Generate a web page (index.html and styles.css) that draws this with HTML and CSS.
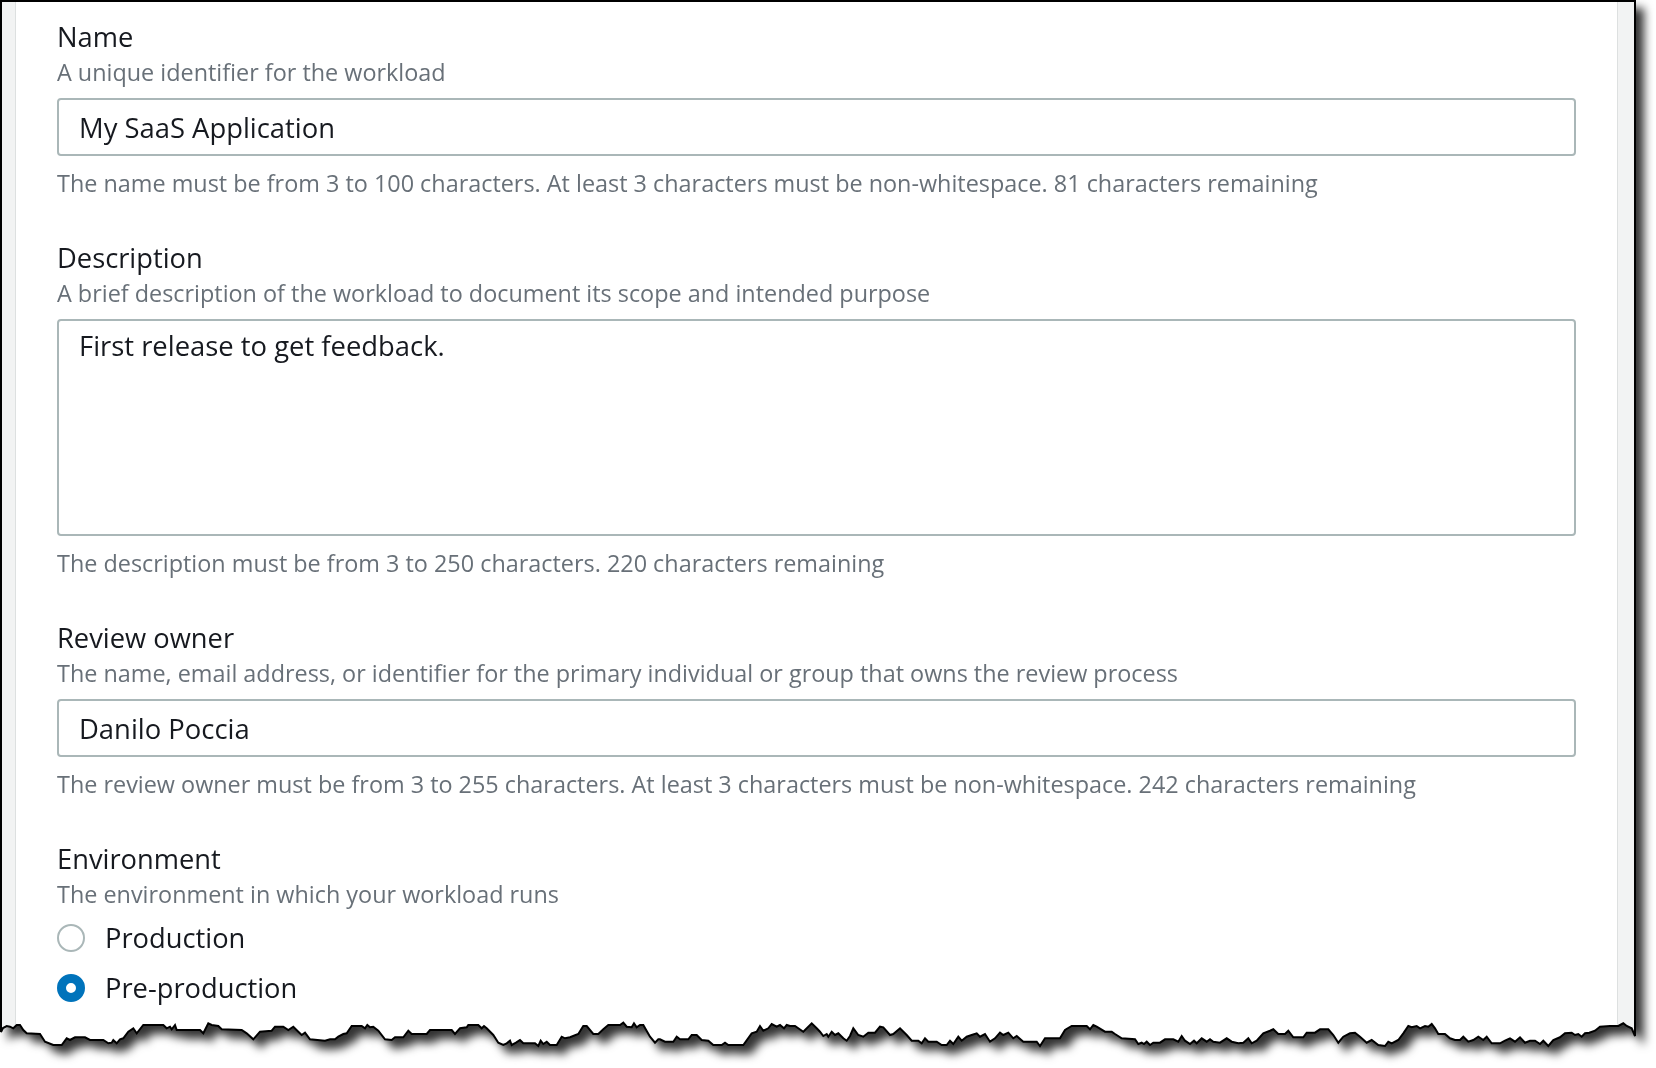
FILE: index.html
```html
<!DOCTYPE html>
<html lang="en">
<head>
<meta charset="utf-8">
<title>Workload properties</title>
<link rel="stylesheet" href="styles.css">
</head>
<body>
<div class="paper">
  <div class="sheet">
    <div class="strip strip-left"></div>
    <main class="form">
      <div class="field">
        <label class="label" for="name">Name</label>
        <div class="desc">A unique identifier for the workload</div>
        <input class="input" id="name" type="text" value="My SaaS Application">
        <div class="constraint">The name must be from 3 to 100 characters. At least 3 characters must be non-whitespace. 81 characters remaining</div>
      </div>
      <div class="field">
        <label class="label" for="description">Description</label>
        <div class="desc">A brief description of the workload to document its scope and intended purpose</div>
        <textarea class="input textarea" id="description">First release to get feedback.</textarea>
        <div class="constraint">The description must be from 3 to 250 characters. 220 characters remaining</div>
      </div>
      <div class="field">
        <label class="label" for="owner">Review owner</label>
        <div class="desc">The name, email address, or identifier for the primary individual or group that owns the review process</div>
        <input class="input" id="owner" type="text" value="Danilo Poccia">
        <div class="constraint">The review owner must be from 3 to 255 characters. At least 3 characters must be non-whitespace. 242 characters remaining</div>
      </div>
      <div class="field">
        <div class="label">Environment</div>
        <div class="desc">The environment in which your workload runs</div>
        <div class="radios">
          <label class="radio"><input type="radio" name="env"><span>Production</span></label>
          <label class="radio"><input type="radio" name="env" checked><span>Pre-production</span></label>
        </div>
      </div>
    </main>
    <div class="strip strip-right"></div>
  </div>
  <svg class="torn" width="1636" height="48" viewBox="0 1020 1636 48" aria-hidden="true">
    <defs>
      <clipPath id="tear">
        <polygon points="0,1020 0,1032 3,1028 6.7,1026 10,1026.7 13.3,1028.3 16.7,1025 20,1025 23.3,1030 26.7,1033.3 40,1034 45,1041.7 53.3,1045 61.7,1045 66.7,1038.3 70,1040 75,1037.3 85,1037.3 90,1040 103.3,1040 108.3,1043.3 111.7,1042.7 113.3,1040 116.7,1043.3 120,1039.3 123.3,1038.3 128.3,1031.7 133.3,1028.3 136.7,1033.3 143.3,1025 163.3,1025 166.7,1028.3 170,1026.7 171.7,1029.3 175,1025 176.7,1030 200,1030 203.3,1033.3 208.3,1023.3 211.7,1025 218.3,1026 221.7,1029.3 241.7,1030 246.7,1033.3 253.3,1039.3 260,1031.7 271.7,1030.7 275,1026.7 283.3,1026.7 288.3,1030 293.3,1026.7 298.3,1031.7 301.7,1035 305,1032.7 310,1039.3 325,1040.7 330,1039.3 335,1039.3 338.3,1036.7 343.3,1034 346.7,1033.3 351.7,1026 361.7,1026 365,1028.3 367.3,1025 370,1027.3 373.3,1026.7 378.3,1030.7 385,1039.3 391.7,1040 395,1037.3 403.3,1037.3 408.3,1030.7 411.7,1034 426.7,1034 430,1030 451.7,1030 455,1034 460,1028.3 466.7,1027.3 468.3,1025 478.3,1025 481.7,1028.3 484,1026 486.7,1028.3 493.3,1035 498.3,1042.7 503.3,1045 506.7,1043.3 510,1040.7 511.7,1045 516,1042.7 520,1040 523.3,1043.3 535,1043.3 538.3,1046 540.7,1040.7 543.3,1044 546.7,1041.7 550,1045 556.7,1045 561.7,1036.7 565,1038.3 570,1037.3 578.3,1034 583.3,1026 586.7,1026 593.3,1034 598.3,1034 603.3,1029.3 608.3,1025 620,1025 623.3,1022.7 626.7,1026.7 631.7,1027.3 634,1023.3 636.7,1027.3 640,1025 643.3,1025 650,1036.7 655,1042.7 658.3,1039.3 660,1039.3 665,1041.7 673.3,1041.7 676.7,1036.7 680,1039.3 688.3,1039.3 691.7,1035 696.7,1035 701.7,1040 708.3,1040.7 713.3,1045 721.7,1045 725,1042.7 728.3,1045 743.3,1045 751.7,1033.3 756.7,1031.7 760,1026 763.3,1030.7 768.3,1028.3 771.7,1024 776.7,1026.7 780,1025 784,1028.3 786.7,1025 790,1026 795,1026 803.3,1031.7 811.7,1023.3 816.7,1028.3 820,1031.7 823.3,1036 826.7,1034 828.3,1036.7 831.7,1031.7 835,1035 838.3,1033.3 843.3,1038.3 846.7,1040.7 850,1036 853.3,1028.3 858.3,1035 863.3,1036.7 868.3,1032.7 875,1032.7 880,1026.7 883.3,1027.3 890,1035 893.3,1034 900,1028.3 906.7,1035 911.7,1040.7 918.3,1040.7 921.7,1043.3 925,1038.3 928.3,1041.7 936.7,1041.7 941.7,1045 946.7,1045 950,1040.7 953.3,1044 958.3,1036.7 961.7,1040.7 966.7,1036.7 971.7,1035 976.7,1033.3 980,1036.7 985,1034 990,1041.7 995,1038.3 1000,1032.7 1003.3,1035 1008.3,1032.7 1013.3,1038.3 1016.7,1036 1023.3,1041.7 1036.7,1041.7 1040,1046 1045,1038.3 1060,1038.3 1065,1030 1071.7,1026 1086.7,1026 1090,1029.3 1093.3,1025 1096.7,1026.7 1105,1031.7 1111.7,1031.7 1115,1034 1121.7,1038.3 1135,1039.3 1138.3,1044 1141.7,1042.7 1144,1044 1146.7,1041.7 1150,1045 1153.3,1042.7 1160,1042.7 1165,1039.3 1173.3,1039.3 1178.3,1041.7 1181.7,1036 1185,1040.7 1190,1044 1194,1040.7 1196.7,1043.3 1201.7,1038.3 1206.7,1041.7 1210,1039.3 1213.3,1041.7 1220,1042.7 1226.7,1038.3 1231.7,1041.7 1238.3,1043.3 1243.3,1042.7 1248.3,1038.3 1251.7,1043.3 1256.7,1040.7 1263.3,1033.3 1270,1030.7 1273.3,1029.3 1278.3,1034 1285,1034 1288.3,1030.7 1293.3,1037.3 1303.3,1037.3 1306.7,1032.7 1315,1032.7 1320,1029.3 1328.3,1029.3 1333.3,1035 1338.3,1042.7 1343.3,1036.7 1350,1033.3 1355,1032.7 1360,1036.7 1366.7,1042.7 1371.7,1040 1378.3,1045 1385,1046 1388.3,1041.7 1391.7,1043.3 1398.3,1040 1403.3,1033.3 1408.3,1026 1411.7,1027.3 1416.7,1026 1420,1028.3 1425,1026 1428.3,1026.7 1431.7,1024 1435,1028.3 1438.3,1034 1445,1034 1450,1038.3 1455,1040 1460,1040 1463.3,1036.7 1468.3,1041.7 1473.3,1040 1478.3,1036.7 1483.3,1040 1486.7,1036.7 1491.7,1043.3 1500,1043.3 1505,1040.7 1510,1038.3 1515,1041.7 1520,1037.3 1525,1042.7 1530,1040.7 1535,1040.7 1540,1044 1543.3,1040.7 1548.3,1046 1553.3,1040 1560,1037.3 1565,1033.3 1571.7,1032.7 1575,1035 1578.3,1034 1581.7,1036.7 1585,1033.3 1589.3,1032.7 1595,1030.7 1600,1026.7 1610,1026 1618.3,1026 1623.3,1023.3 1626.7,1026 1631.7,1028.3 1635,1036 1636,1036 1636,1020"/>
      </clipPath>
    </defs>
    <g clip-path="url(#tear)">
      <rect x="0" y="1020" width="1636" height="48" fill="#ffffff"/>
      <rect x="2" y="1020" width="13" height="48" fill="#f2f3f3"/>
      <rect x="15" y="1020" width="1" height="48" fill="#dde0e0"/>
      <rect x="1617" y="1020" width="1" height="48" fill="#dde0e0"/>
      <rect x="1618" y="1020" width="16" height="48" fill="#f2f3f3"/>
    </g>
    <polyline fill="none" stroke="#000" stroke-width="2" stroke-linejoin="miter" points="1,1020 1,1032 3,1028 6.7,1026 10,1026.7 13.3,1028.3 16.7,1025 20,1025 23.3,1030 26.7,1033.3 40,1034 45,1041.7 53.3,1045 61.7,1045 66.7,1038.3 70,1040 75,1037.3 85,1037.3 90,1040 103.3,1040 108.3,1043.3 111.7,1042.7 113.3,1040 116.7,1043.3 120,1039.3 123.3,1038.3 128.3,1031.7 133.3,1028.3 136.7,1033.3 143.3,1025 163.3,1025 166.7,1028.3 170,1026.7 171.7,1029.3 175,1025 176.7,1030 200,1030 203.3,1033.3 208.3,1023.3 211.7,1025 218.3,1026 221.7,1029.3 241.7,1030 246.7,1033.3 253.3,1039.3 260,1031.7 271.7,1030.7 275,1026.7 283.3,1026.7 288.3,1030 293.3,1026.7 298.3,1031.7 301.7,1035 305,1032.7 310,1039.3 325,1040.7 330,1039.3 335,1039.3 338.3,1036.7 343.3,1034 346.7,1033.3 351.7,1026 361.7,1026 365,1028.3 367.3,1025 370,1027.3 373.3,1026.7 378.3,1030.7 385,1039.3 391.7,1040 395,1037.3 403.3,1037.3 408.3,1030.7 411.7,1034 426.7,1034 430,1030 451.7,1030 455,1034 460,1028.3 466.7,1027.3 468.3,1025 478.3,1025 481.7,1028.3 484,1026 486.7,1028.3 493.3,1035 498.3,1042.7 503.3,1045 506.7,1043.3 510,1040.7 511.7,1045 516,1042.7 520,1040 523.3,1043.3 535,1043.3 538.3,1046 540.7,1040.7 543.3,1044 546.7,1041.7 550,1045 556.7,1045 561.7,1036.7 565,1038.3 570,1037.3 578.3,1034 583.3,1026 586.7,1026 593.3,1034 598.3,1034 603.3,1029.3 608.3,1025 620,1025 623.3,1022.7 626.7,1026.7 631.7,1027.3 634,1023.3 636.7,1027.3 640,1025 643.3,1025 650,1036.7 655,1042.7 658.3,1039.3 660,1039.3 665,1041.7 673.3,1041.7 676.7,1036.7 680,1039.3 688.3,1039.3 691.7,1035 696.7,1035 701.7,1040 708.3,1040.7 713.3,1045 721.7,1045 725,1042.7 728.3,1045 743.3,1045 751.7,1033.3 756.7,1031.7 760,1026 763.3,1030.7 768.3,1028.3 771.7,1024 776.7,1026.7 780,1025 784,1028.3 786.7,1025 790,1026 795,1026 803.3,1031.7 811.7,1023.3 816.7,1028.3 820,1031.7 823.3,1036 826.7,1034 828.3,1036.7 831.7,1031.7 835,1035 838.3,1033.3 843.3,1038.3 846.7,1040.7 850,1036 853.3,1028.3 858.3,1035 863.3,1036.7 868.3,1032.7 875,1032.7 880,1026.7 883.3,1027.3 890,1035 893.3,1034 900,1028.3 906.7,1035 911.7,1040.7 918.3,1040.7 921.7,1043.3 925,1038.3 928.3,1041.7 936.7,1041.7 941.7,1045 946.7,1045 950,1040.7 953.3,1044 958.3,1036.7 961.7,1040.7 966.7,1036.7 971.7,1035 976.7,1033.3 980,1036.7 985,1034 990,1041.7 995,1038.3 1000,1032.7 1003.3,1035 1008.3,1032.7 1013.3,1038.3 1016.7,1036 1023.3,1041.7 1036.7,1041.7 1040,1046 1045,1038.3 1060,1038.3 1065,1030 1071.7,1026 1086.7,1026 1090,1029.3 1093.3,1025 1096.7,1026.7 1105,1031.7 1111.7,1031.7 1115,1034 1121.7,1038.3 1135,1039.3 1138.3,1044 1141.7,1042.7 1144,1044 1146.7,1041.7 1150,1045 1153.3,1042.7 1160,1042.7 1165,1039.3 1173.3,1039.3 1178.3,1041.7 1181.7,1036 1185,1040.7 1190,1044 1194,1040.7 1196.7,1043.3 1201.7,1038.3 1206.7,1041.7 1210,1039.3 1213.3,1041.7 1220,1042.7 1226.7,1038.3 1231.7,1041.7 1238.3,1043.3 1243.3,1042.7 1248.3,1038.3 1251.7,1043.3 1256.7,1040.7 1263.3,1033.3 1270,1030.7 1273.3,1029.3 1278.3,1034 1285,1034 1288.3,1030.7 1293.3,1037.3 1303.3,1037.3 1306.7,1032.7 1315,1032.7 1320,1029.3 1328.3,1029.3 1333.3,1035 1338.3,1042.7 1343.3,1036.7 1350,1033.3 1355,1032.7 1360,1036.7 1366.7,1042.7 1371.7,1040 1378.3,1045 1385,1046 1388.3,1041.7 1391.7,1043.3 1398.3,1040 1403.3,1033.3 1408.3,1026 1411.7,1027.3 1416.7,1026 1420,1028.3 1425,1026 1428.3,1026.7 1431.7,1024 1435,1028.3 1438.3,1034 1445,1034 1450,1038.3 1455,1040 1460,1040 1463.3,1036.7 1468.3,1041.7 1473.3,1040 1478.3,1036.7 1483.3,1040 1486.7,1036.7 1491.7,1043.3 1500,1043.3 1505,1040.7 1510,1038.3 1515,1041.7 1520,1037.3 1525,1042.7 1530,1040.7 1535,1040.7 1540,1044 1543.3,1040.7 1548.3,1046 1553.3,1040 1560,1037.3 1565,1033.3 1571.7,1032.7 1575,1035 1578.3,1034 1581.7,1036.7 1585,1033.3 1589.3,1032.7 1595,1030.7 1600,1026.7 1610,1026 1618.3,1026 1623.3,1023.3 1626.7,1026 1631.7,1028.3 1635,1036 1635,1020"/>
  </svg>
</div>
</body>
</html>
```

FILE: styles.css
```css
html, body {
  margin: 0;
  background: #ffffff;
}

body {
  font-family: "Open Sans", "Noto Sans", sans-serif;
  font-weight: 500;
  color: #16191f;
  overflow: hidden;
}

.paper {
  width: 1636px;
  filter: drop-shadow(8px 8px 5px rgba(0, 0, 0, 0.8));
}

.sheet {
  display: flex;
  height: 1020px;
  box-sizing: border-box;
  border: 2px solid #000000;
  border-bottom: 0;
  background: #ffffff;
  overflow: hidden;
}

.strip {
  flex: none;
  background: #f2f3f3;
}

.strip-left {
  width: 13px;
  border-right: 1px solid #dde0e0;
}

.strip-right {
  width: 16px;
  border-left: 1px solid #dde0e0;
}

.form {
  flex: 1;
  min-width: 0;
  padding: 16px 41px 0;
}

.field + .field {
  margin-top: 40px;
}

.label {
  display: block;
  font-size: 27.3px;
  line-height: 38px;
  color: #16191f;
}

.desc,
.constraint {
  font-size: 23.4px;
  line-height: 32px;
  color: #687078;
}

.input {
  display: block;
  width: 100%;
  box-sizing: border-box;
  height: 58px;
  margin: 10px 0 0;
  padding: 0 20px;
  border: 2px solid #aab7b8;
  border-radius: 4px;
  background: #ffffff;
  font-family: inherit;
  font-weight: inherit;
  font-size: 27.4px;
  color: #16191f;
  outline: none;
}

.textarea {
  height: 217px;
  padding: 7px 20px;
  line-height: 36px;
  resize: none;
  overflow: hidden;
}

.constraint {
  margin-top: 11px;
}

.radios {
  margin-top: 10px;
  display: flex;
  flex-direction: column;
  gap: 14px;
}

.radio {
  display: flex;
  align-items: center;
  gap: 20px;
  font-size: 27.3px;
  line-height: 36px;
  color: #16191f;
}

.radio input {
  appearance: none;
  -webkit-appearance: none;
  margin: 0;
  flex: none;
  width: 28px;
  height: 28px;
  box-sizing: border-box;
  border-radius: 50%;
  border: 2px solid #aab7b8;
  background: #ffffff;
}

.radio input:checked {
  border: 9px solid #0073bb;
}

.torn {
  display: block;
}
```
